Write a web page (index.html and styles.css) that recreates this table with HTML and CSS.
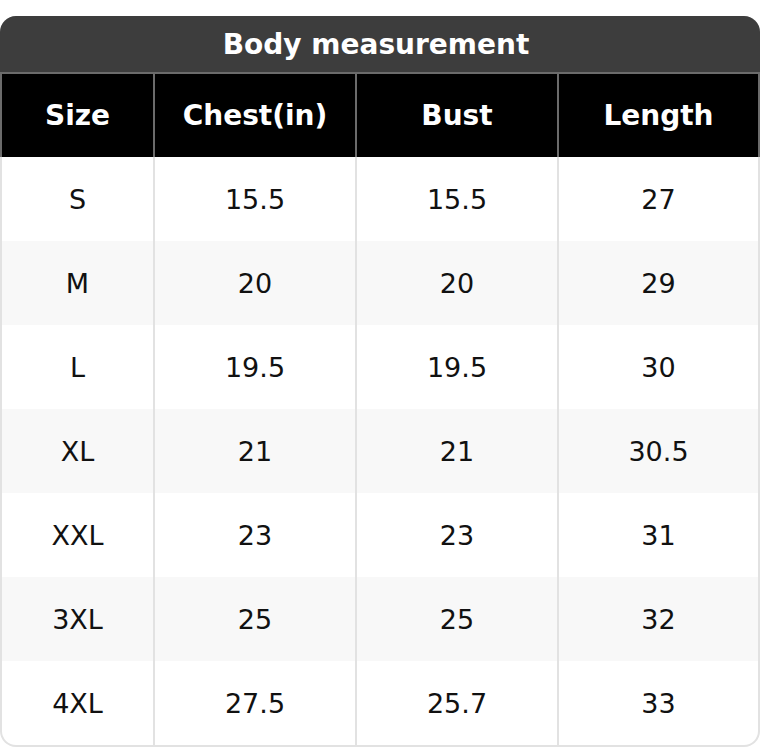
FILE: index.html
```html
<!DOCTYPE html>
<html>
<head>
<meta charset="utf-8">
<link rel="stylesheet" href="styles.css">
</head>
<body>
<div class="card">
  <div class="title">Body measurement</div>
  <div class="grid head">
    <div class="cell">Size</div>
    <div class="cell">Chest(in)</div>
    <div class="cell">Bust</div>
    <div class="cell">Length</div>
  </div>
  <div class="grid row">
    <div class="cell">S</div><div class="cell">15.5</div><div class="cell">15.5</div><div class="cell">27</div>
  </div>
  <div class="grid row alt">
    <div class="cell">M</div><div class="cell">20</div><div class="cell">20</div><div class="cell">29</div>
  </div>
  <div class="grid row">
    <div class="cell">L</div><div class="cell">19.5</div><div class="cell">19.5</div><div class="cell">30</div>
  </div>
  <div class="grid row alt">
    <div class="cell">XL</div><div class="cell">21</div><div class="cell">21</div><div class="cell">30.5</div>
  </div>
  <div class="grid row">
    <div class="cell">XXL</div><div class="cell">23</div><div class="cell">23</div><div class="cell">31</div>
  </div>
  <div class="grid row alt">
    <div class="cell">3XL</div><div class="cell">25</div><div class="cell">25</div><div class="cell">32</div>
  </div>
  <div class="grid row last">
    <div class="cell">4XL</div><div class="cell">27.5</div><div class="cell">25.7</div><div class="cell">33</div>
  </div>
</div>
</body>
</html>
```

FILE: styles.css
```css
html, body {
  margin: 0;
  padding: 0;
  background: #fff;
}

.card {
  margin-top: 16px;
  width: 760px;
  box-sizing: border-box;
  padding: 0 2px 2px;
  background: #e2e2e2;
  border-radius: 16px;
  overflow: hidden;
  font-family: "DejaVu Sans", sans-serif;
}

.title {
  margin: 0 -2px;
  height: 56px;
  padding-right: 8px;
  background: #3d3d3d;
  color: #fff;
  font-weight: bold;
  font-size: 28px;
  display: flex;
  align-items: center;
  justify-content: center;
  border-bottom: 2px solid #6b6b6b;
}

.grid {
  display: grid;
  grid-template-columns: 151px 200px 200px 199px;
  column-gap: 2px;
}

.cell {
  display: flex;
  align-items: center;
  justify-content: center;
}

.head {
  margin: 0 -2px;
  height: 83px;
  background: #6b6b6b;
  border-left: 2px solid #6b6b6b;
  border-right: 2px solid #6b6b6b;
}

.head .cell {
  background: #000;
  color: #fff;
  font-weight: bold;
  font-size: 28px;
}

.row {
  height: 84px;
}

.row .cell {
  background: #fff;
  color: #111;
  font-size: 27px;
}

.row.alt .cell {
  background: #f8f8f8;
}

.row.last .cell:first-child {
  border-bottom-left-radius: 14px;
}

.row.last .cell:last-child {
  border-bottom-right-radius: 14px;
}
```
